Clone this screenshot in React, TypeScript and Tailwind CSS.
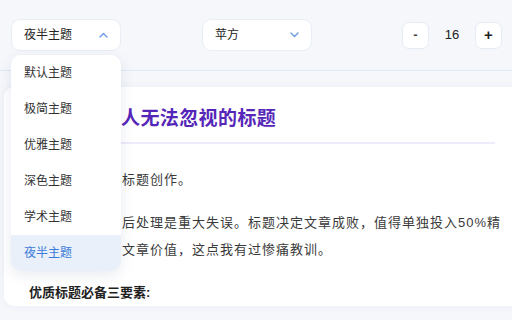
import React from "react";

const themes = ["默认主题", "极简主题", "优雅主题", "深色主题", "学术主题", "夜半主题"];

function Chevron({ up }: { up?: boolean }) {
  return (
    <svg width="9" height="6" viewBox="0 0 9 6" fill="none" className="shrink-0">
      <path
        d={up ? "M1 5L4.5 1.5L8 5" : "M1 1L4.5 4.5L8 1"}
        stroke="#6b9be4"
        strokeWidth="1.4"
        strokeLinecap="round"
        strokeLinejoin="round"
      />
    </svg>
  );
}

export default function App() {
  return (
    <div className="h-[320px] w-[512px] overflow-hidden bg-[#f5f7fb] font-['Liberation_Sans','Noto_Sans_CJK_SC',sans-serif] text-[#333]">
      <div className="flex h-[71px] items-start border-b border-[#dfe8f6] pl-[11px] pr-[10px] pt-[19px]">
        <div className="relative z-10">
          <button className="flex h-[32px] w-[110px] items-center justify-between rounded-[9px] border border-[#e8edf6] bg-white pl-[12px] pr-[12px] text-[12px] text-[#222]">
            夜半主题
            <Chevron up />
          </button>
          <div className="absolute left-0 top-[36px] w-[110px] overflow-hidden rounded-[10px] bg-white shadow-[0_4px_14px_rgba(40,60,110,0.10)]">
            {themes.map((t, i) => (
              <div
                key={t}
                className={
                  i === themes.length - 1
                    ? "flex h-[36px] items-center bg-[#e9f0fa] pl-[13px] text-[12px] text-[#3b7bd9]"
                    : "flex h-[36px] items-center pl-[13px] text-[12px] text-[#333]"
                }
              >
                {t}
              </div>
            ))}
          </div>
        </div>

        <button className="ml-[81px] flex h-[32px] w-[110px] items-center justify-between rounded-[9px] border border-[#e8edf6] bg-white pl-[12px] pr-[12px] text-[12px] text-[#222]">
          苹方
          <Chevron />
        </button>

        <div className="ml-auto flex h-[32px] items-center">
          <button className="flex h-[27px] w-[27px] items-center justify-center rounded-[7px] border border-[#e6ecf6] bg-white text-[13px] font-bold text-[#444]">
            -
          </button>
          <span className="w-[46px] text-center text-[13px] text-[#222]">16</span>
          <button className="flex h-[27px] w-[27px] items-center justify-center rounded-[7px] border border-[#e6ecf6] bg-white text-[15px] font-bold text-[#222]">
            +
          </button>
        </div>
      </div>

      <div className="ml-[4px] mt-[16px] w-[522px] rounded-[10px] bg-white px-5 pt-[18px] shadow-[0_0_8px_rgba(60,80,140,0.06)]">
        <h2 className="mr-[11px] border-b-2 border-[#efeafc] pb-[9px] text-[19px] font-bold leading-[28px] tracking-[0.4px] text-[#5526b8]">
          如何写出让人无法忽视的标题
        </h2>
        <p className="mt-[22px] text-[13px] leading-[27px] tracking-[1px] text-[#3a3a3a]">
          今天我们来聊聊标题创作。
        </p>
        <p className="mt-[16px] text-[13px] leading-[27px] tracking-[1px] text-[#3a3a3a]">
          很多人把标题最后处理是重大失误。标题决定文章成败，值得单独投入50%精力，它直接影响文章价值，这点我有过惨痛教训。
        </p>
        <p className="ml-[5px] mt-[16px] text-[13px] font-bold leading-[27px] text-[#1f1f1f]">
          优质标题必备三要素:
        </p>
      </div>
    </div>
  );
}
